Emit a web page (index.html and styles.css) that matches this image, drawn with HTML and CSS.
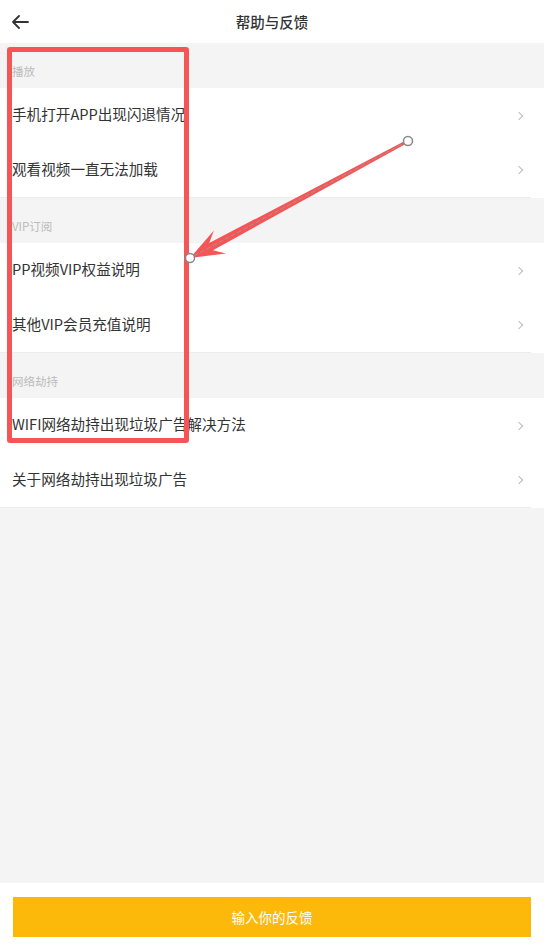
FILE: index.html
```html
<!DOCTYPE html>
<html lang="zh-CN">
<head>
  <meta charset="UTF-8">
  <title>帮助与反馈</title>
  <link rel="stylesheet" href="styles.css">
</head>
<body>
  <div class="page">
    <header class="nav">
      <svg class="back" width="18" height="14" viewBox="0 0 18 14">
        <path d="M17 7H2M8 1L2 7l6 6" fill="none" stroke="#333" stroke-width="1.8" stroke-linecap="round" stroke-linejoin="round"/>
      </svg>
      <h1 class="title">帮助与反馈</h1>
    </header>

    <main class="list">
      <!-- 播放 -->
      <div class="section-title">播放</div>
      <div class="items">
        <div class="row"><span>手机打开APP出现闪退情况</span><i class="chevron"></i></div>
        <div class="row"><span>观看视频一直无法加载</span><i class="chevron"></i></div>
      </div>

      <!-- VIP订阅 -->
      <div class="section-title">VIP订阅</div>
      <div class="items">
        <div class="row"><span>PP视频VIP权益说明</span><i class="chevron"></i></div>
        <div class="row"><span>其他VIP会员充值说明</span><i class="chevron"></i></div>
      </div>

      <!-- 网络劫持 -->
      <div class="section-title">网络劫持</div>
      <div class="items">
        <div class="row"><span>WIFI网络劫持出现垃圾广告解决方法</span><i class="chevron"></i></div>
        <div class="row"><span>关于网络劫持出现垃圾广告</span><i class="chevron"></i></div>
      </div>
    </main>

    <footer class="footer">
      <button class="feedback-button">输入你的反馈</button>
    </footer>

    <!-- 注釈：赤枠と矢印 -->
    <div class="mark-box"></div>
    <svg class="mark-arrow" width="544" height="950" viewBox="0 0 544 950">
      <polygon points="190,258 226,253.4 213,250.2 408.8,142.3 407.2,139.7 209.2,243 213.9,230.4" fill="#f75555"/>
      <line x1="408" y1="141" x2="190" y2="258" stroke="#999" stroke-width="1" stroke-dasharray="5 2"/>
      <circle cx="408" cy="141" r="4.5" fill="#fff" stroke="#888" stroke-width="1.5"/>
      <circle cx="190" cy="258" r="4.5" fill="#fff" stroke="#888" stroke-width="1.5"/>
    </svg>
  </div>
</body>
</html>
```

FILE: styles.css
```css
body {
  margin: 0;
  font-family: "Noto Sans CJK SC", "Noto Sans", sans-serif;
  background-color: #f4f4f4;
}

.page {
  position: relative;
  width: 544px;
  height: 950px;
  display: flex;
  flex-direction: column;
  overflow: hidden;
}

.nav {
  position: relative;
  height: 43px;
  background-color: #fff;
  display: flex;
  align-items: center;
  justify-content: center;
}

.back {
  position: absolute;
  left: 11px;
  top: 15px;
}

.title {
  margin: 0;
  font-size: 14.5px;
  font-weight: 500;
  color: #333;
}

.list {
  flex: 1;
  background-color: #f4f4f4;
}

.section-title {
  height: 45px;
  box-sizing: border-box;
  padding: 20px 12px 0;
  font-size: 11.5px;
  line-height: 16px;
  color: #bbb;
}

.items {
  background-color: #fff;
}

.items::after {
  content: "";
  display: block;
  height: 1px;
  margin-right: 13px;
  background-color: #ececec;
}

.row {
  height: 55px;
  box-sizing: border-box;
  display: flex;
  align-items: center;
  justify-content: space-between;
  padding: 0 22px 4px 12px;
  font-size: 14.6px;
  color: #333;
}

.row:last-child {
  height: 54px;
}

.chevron {
  width: 5px;
  height: 5px;
  margin-top: 4px;
  border-top: 1.4px solid #bbb;
  border-right: 1.4px solid #bbb;
  transform: rotate(45deg);
}

.footer {
  height: 67px;
  box-sizing: border-box;
  padding: 14px 13px 0;
  background-color: #fff;
}

.feedback-button {
  display: block;
  width: 100%;
  height: 40px;
  border: none;
  background-color: #fcb90a;
  color: #fff;
  font-family: inherit;
  font-size: 13.5px;
}

.mark-box {
  position: absolute;
  left: 7px;
  top: 47px;
  width: 182px;
  height: 396px;
  box-sizing: border-box;
  border: 5px solid #f75555;
  border-radius: 3px;
}

.mark-arrow {
  position: absolute;
  left: 0;
  top: 0;
  pointer-events: none;
}
```
